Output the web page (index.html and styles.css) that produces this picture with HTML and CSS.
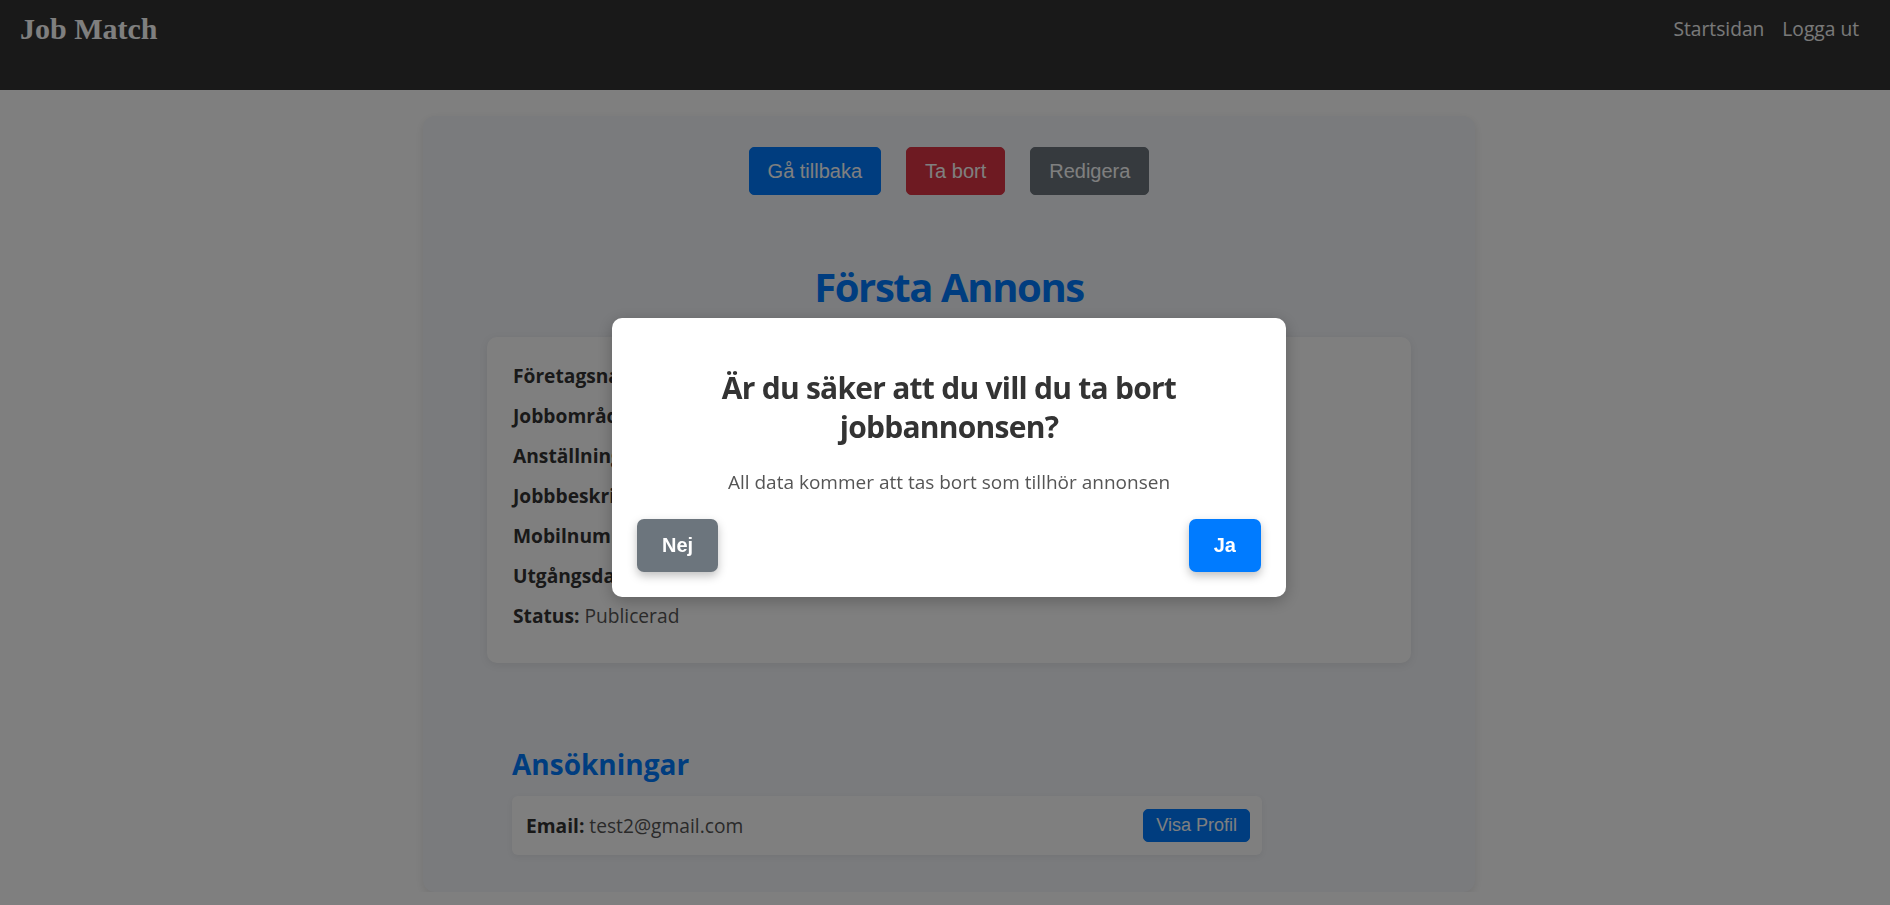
FILE: index.html
```html
<!DOCTYPE html>
<html lang="sv">
<head>
<meta charset="utf-8">
<title>Job Match</title>
<link rel="stylesheet" href="styles.css">
</head>
<body>
<nav class="navbar">
  <a class="brand" href="#">Job Match</a>
  <div class="nav-links">
    <a href="#">Startsidan</a>
    <a href="#">Logga ut</a>
  </div>
</nav>
<main class="page">
  <div class="container">
    <div class="actions">
      <button class="btn btn-primary">Gå tillbaka</button>
      <button class="btn btn-danger">Ta bort</button>
      <button class="btn btn-secondary">Redigera</button>
    </div>
    <h1 class="job-title">Första Annons</h1>
    <div class="details-card">
      <p><strong>Företagsnamn:</strong> Test AB</p>
      <p><strong>Jobbområde:</strong> IT</p>
      <p><strong>Anställningsform:</strong> Heltid</p>
      <p><strong>Jobbbeskrivning:</strong> Test</p>
      <p><strong>Mobilnummer:</strong> 0701234567</p>
      <p><strong>Utgångsdatum:</strong> 2024-12-31</p>
      <p><strong>Status:</strong> Publicerad</p>
    </div>
    <section class="applications">
      <h3 class="section-title">Ansökningar</h3>
      <div class="app-card">
        <p><strong>Email:</strong> test2@gmail.com</p>
        <button class="btn-sm">Visa Profil</button>
      </div>
    </section>
  </div>
</main>
<div class="overlay">
  <div class="modal">
    <h2 class="modal-title">Är du säker att du vill du ta bort jobbannonsen?</h2>
    <p class="modal-text">All data kommer att tas bort som tillhör annonsen</p>
    <div class="modal-actions">
      <button class="mbtn mbtn-no">Nej</button>
      <button class="mbtn mbtn-yes">Ja</button>
    </div>
  </div>
</div>
</body>
</html>
```
FILE: styles.css
```css
* { box-sizing: border-box; }

html, body {
  margin: 0;
  padding: 0;
  background: #ffffff;
  font-family: "Open Sans", "Noto Sans", sans-serif;
  color: #333;
}

.navbar {
  height: 90px;
  background: #333333;
  display: flex;
  justify-content: space-between;
  align-items: flex-start;
  padding: 0 31px 0 20px;
}

.brand {
  display: block;
  margin-top: 12px;
  font-family: "Liberation Serif", serif;
  font-weight: bold;
  font-size: 30px;
  line-height: 34px;
  color: #ffffff;
  text-decoration: none;
}

.nav-links {
  display: flex;
  gap: 18px;
  margin-top: 16px;
}

.nav-links a {
  font-size: 19.2px;
  line-height: 26px;
  color: #f2f2f2;
  text-decoration: none;
}

.page {
  padding-left: 8px;
}

.container {
  width: 1052px;
  margin: 26px auto 0;
  background: #f4f6fa;
  border-radius: 12px;
  padding: 31px 64px 37px;
  box-shadow: 0 3px 10px rgba(0, 0, 0, 0.1);
}

.actions {
  display: flex;
  justify-content: center;
  gap: 25px;
}

.btn {
  font-family: "Liberation Sans", Arial, sans-serif;
  font-size: 20px;
  line-height: 30px;
  padding: 8px 18px;
  border: 1px solid transparent;
  border-radius: 5px;
  color: #fff;
  cursor: pointer;
}

.btn-primary { background: #007bff; border-color: #007bff; }
.btn-danger { background: #dc3545; border-color: #dc3545; }
.btn-secondary { background: #6c757d; border-color: #6c757d; }

.job-title {
  margin: 67.5px 0 26.5px;
  text-align: center;
  font-size: 40px;
  line-height: 48px;
  font-weight: 700;
  letter-spacing: -1.4px;
  color: #007bff;
}

.details-card {
  background: #ffffff;
  border-radius: 10px;
  padding: 18.8px 26px 27.2px;
  box-shadow: 0 2px 8px rgba(0, 0, 0, 0.08);
}

.details-card p {
  margin: 0;
  font-size: 19.2px;
  line-height: 40px;
  color: #555;
}

.details-card strong,
.app-card strong {
  color: #333;
}

.applications {
  margin-top: 85.3px;
  padding-left: 25px;
}

.section-title {
  margin: 0 0 14px;
  font-size: 28px;
  line-height: 33.6px;
  font-weight: 700;
  color: #007bff;
}

.app-card {
  width: 750px;
  height: 59px;
  background: #ffffff;
  border-radius: 6px;
  padding: 0 12px 0 14px;
  display: flex;
  align-items: center;
  justify-content: space-between;
  box-shadow: 0 2px 6px rgba(0, 0, 0, 0.06);
}

.app-card p {
  margin: 0;
  font-size: 19.2px;
  color: #555;
}

.btn-sm {
  font-family: "Liberation Sans", Arial, sans-serif;
  font-size: 18px;
  line-height: 21px;
  padding: 5px 12px;
  border: 1px solid #007bff;
  background: #007bff;
  color: #fff;
  border-radius: 5px;
}

.overlay {
  position: fixed;
  inset: 0;
  background: rgba(0, 0, 0, 0.5);
  display: flex;
  align-items: center;
  justify-content: center;
  padding: 10px 0 0 8px;
}

.modal {
  width: 674px;
  background: #ffffff;
  border-radius: 10px;
  padding: 25px;
  box-shadow: 0 4px 16px rgba(0, 0, 0, 0.25);
  text-align: center;
}

.modal-title {
  margin: 25px 0 22.6px;
  font-size: 30px;
  line-height: 39px;
  font-weight: 700;
  letter-spacing: -0.75px;
  color: #333;
}

.modal-text {
  margin: 0 0 23.5px;
  font-size: 19px;
  line-height: 27px;
  color: #555;
}

.modal-actions {
  display: flex;
  justify-content: space-between;
}

.mbtn {
  font-family: "Liberation Sans", Arial, sans-serif;
  font-weight: bold;
  font-size: 20px;
  line-height: 23px;
  padding: 15px 25px;
  border: none;
  border-radius: 7px;
  color: #fff;
  box-shadow: 0 4px 10px rgba(0, 0, 0, 0.25);
}

.mbtn-no { background: #6c757d; }
.mbtn-yes { background: #007bff; }
```
